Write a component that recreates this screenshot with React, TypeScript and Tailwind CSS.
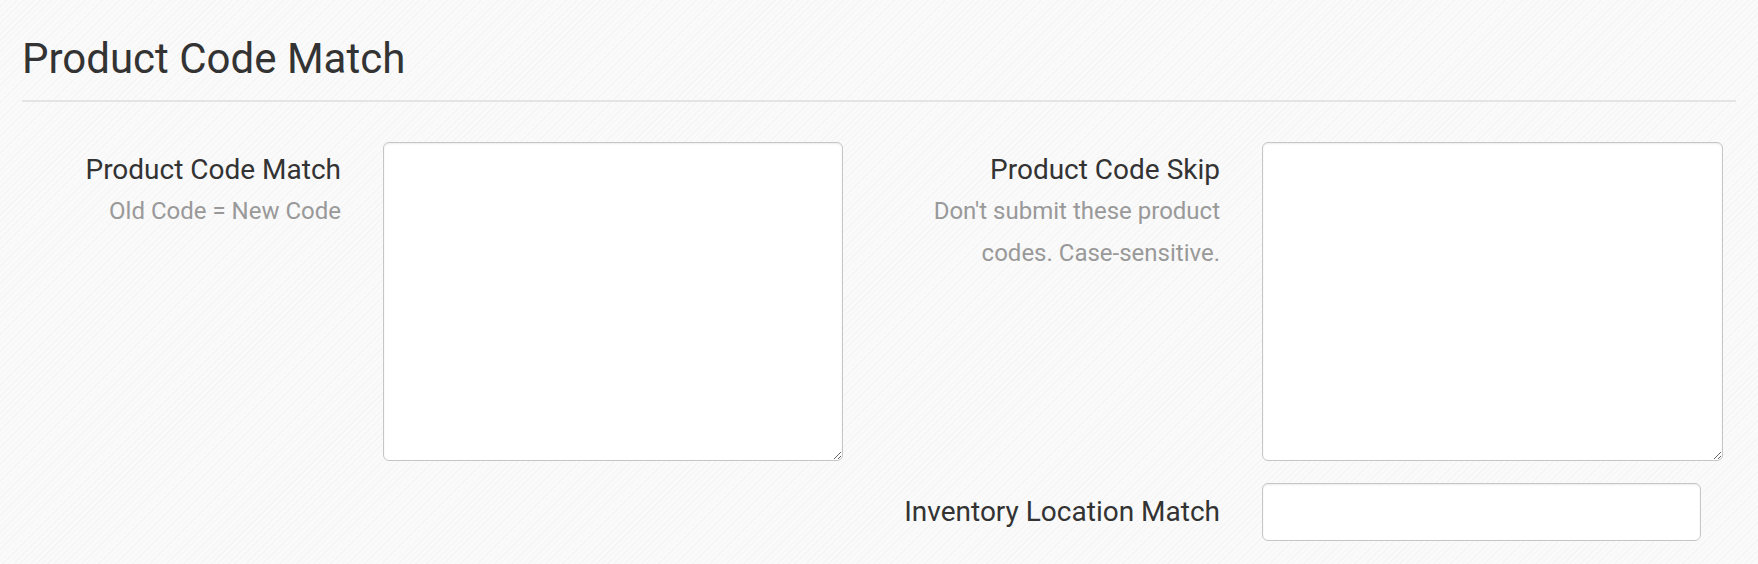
export default function App() {
  const field =
    'block rounded-[6px] border border-[#c6c6c6] bg-white shadow-[inset_0_1px_2px_rgba(0,0,0,0.08)] outline-none'

  return (
    <div className="min-h-screen bg-[#f8f8f8] bg-[repeating-linear-gradient(135deg,#f5f5f5_0px,#f5f5f5_1px,#fafafa_1px,#fafafa_4px)] px-[22px] font-['Roboto',sans-serif] text-[#333]">
      <h1 className="pt-[36px] text-[42px] leading-[46px] font-normal">Product Code Match</h1>
      <div className="mt-[18px] h-[2px] bg-[#e4e4e4]" />

      <div className="mt-[40px] flex">
        {/* left column */}
        <div className="flex w-[857px]">
          <div className="w-[319px] pt-[10px] text-right">
            <div className="text-[28px] leading-[36px]">Product Code Match</div>
            <div className="mt-[2px] text-[24px] leading-[42px] text-[#999]">Old Code = New Code</div>
          </div>
          <textarea className={`${field} ml-[42px] h-[319px] w-[460px]`} />
        </div>

        {/* right column */}
        <div className="flex flex-col">
          <div className="flex">
            <div className="w-[341px] pt-[10px] text-right">
              <div className="text-[28px] leading-[36px]">Product Code Skip</div>
              <div className="mt-[2px] ml-auto w-[300px] text-[24px] leading-[42px] text-[#999]">
                Don't submit these product codes. Case-sensitive.
              </div>
            </div>
            <textarea className={`${field} ml-[42px] h-[319px] w-[461px]`} />
          </div>
          <div className="mt-[22px] flex items-center">
            <label className="w-[341px] text-right text-[28px] leading-[36px]">Inventory Location Match</label>
            <input type="text" className={`${field} ml-[42px] h-[58px] w-[439px]`} />
          </div>
        </div>
      </div>
    </div>
  )
}
